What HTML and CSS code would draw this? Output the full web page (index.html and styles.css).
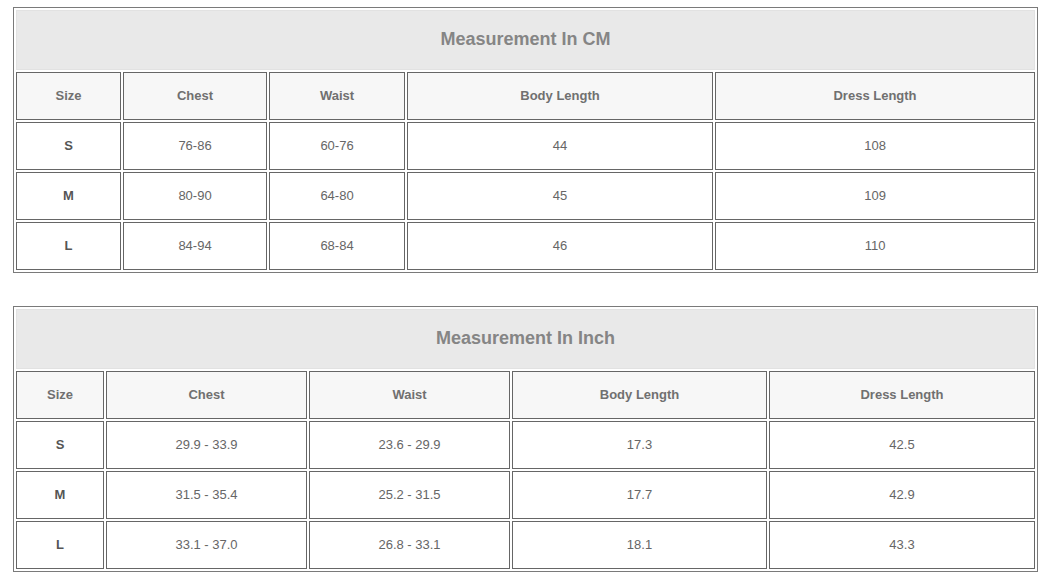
FILE: index.html
```html
<!DOCTYPE html>
<html>
<head>
<meta charset="utf-8">
<link rel="stylesheet" href="styles.css">
</head>
<body>
<div class="page">
  <table class="size-table cm">
    <colgroup>
      <col class="c1"><col class="c2"><col class="c3"><col class="c4"><col class="c5">
    </colgroup>
    <tr><td class="title" colspan="5">Measurement In CM</td></tr>
    <tr class="head"><th>Size</th><th>Chest</th><th>Waist</th><th>Body Length</th><th>Dress Length</th></tr>
    <tr><td class="size">S</td><td>76-86</td><td>60-76</td><td>44</td><td>108</td></tr>
    <tr><td class="size">M</td><td>80-90</td><td>64-80</td><td>45</td><td>109</td></tr>
    <tr><td class="size">L</td><td>84-94</td><td>68-84</td><td>46</td><td>110</td></tr>
  </table>

  <table class="size-table inch">
    <colgroup>
      <col class="c1"><col class="c2"><col class="c3"><col class="c4"><col class="c5">
    </colgroup>
    <tr><td class="title" colspan="5">Measurement In Inch</td></tr>
    <tr class="head"><th>Size</th><th>Chest</th><th>Waist</th><th>Body Length</th><th>Dress Length</th></tr>
    <tr><td class="size">S</td><td>29.9 - 33.9</td><td>23.6 - 29.9</td><td>17.3</td><td>42.5</td></tr>
    <tr><td class="size">M</td><td>31.5 - 35.4</td><td>25.2 - 31.5</td><td>17.7</td><td>42.9</td></tr>
    <tr><td class="size">L</td><td>33.1 - 37.0</td><td>26.8 - 33.1</td><td>18.1</td><td>43.3</td></tr>
  </table>
</div>
</body>
</html>
```
FILE: styles.css
```css
html, body {
  margin: 0;
  padding: 0;
  background: #ffffff;
}

.page {
  padding: 7px 0 0 13px;
  font-family: "Liberation Sans", Arial, sans-serif;
}

.size-table {
  table-layout: fixed;
  width: 1025px;
  border-collapse: separate;
  border-spacing: 2px;
  border: 1px solid #7a7a7a;
  box-sizing: border-box;
}

.size-table.inch {
  margin-top: 33px;
}

.size-table td,
.size-table th {
  border: 1px solid #666666;
  text-align: center;
  vertical-align: middle;
  padding: 0 0 2px 0;
  height: 48px;
  box-sizing: border-box;
  font-size: 13px;
  color: #666666;
  font-weight: normal;
}

.size-table td.title {
  height: 60px;
  background: #e9e9e9;
  border: 1px solid #e2e2e2;
  font-size: 18px;
  font-weight: bold;
  color: #858585;
}

.size-table .head th {
  background: #f7f7f7;
  font-weight: bold;
  color: #707070;
}

.size-table td.size {
  font-weight: bold;
  color: #555555;
}

.cm .c1 { width: 105px; }
.cm .c2 { width: 144px; }
.cm .c3 { width: 136px; }
.cm .c4 { width: 306px; }
.cm .c5 { width: 320px; }

.inch .c1 { width: 88px; }
.inch .c2 { width: 201px; }
.inch .c3 { width: 201px; }
.inch .c4 { width: 255px; }
.inch .c5 { width: 266px; }
```
